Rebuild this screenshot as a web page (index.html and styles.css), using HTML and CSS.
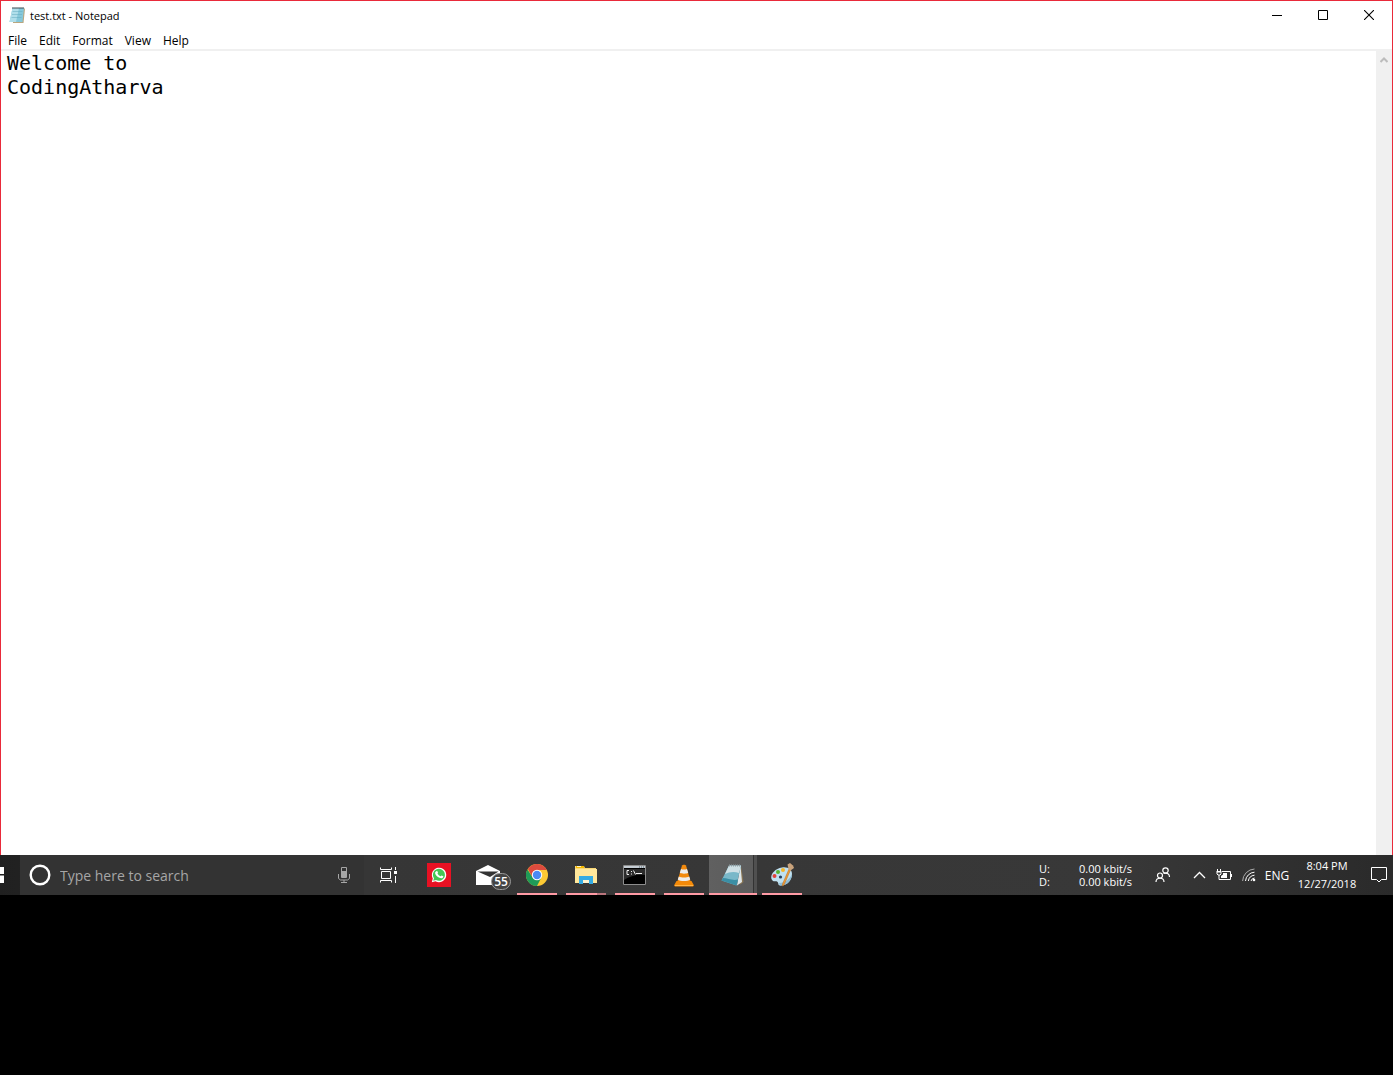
FILE: index.html
```html
<!DOCTYPE html>
<html lang="en">
<head>
  <meta charset="UTF-8">
  <meta name="viewport" content="width=device-width, initial-scale=1.0">
  <title>test.txt - Notepad</title>
  <link rel="stylesheet" href="styles.css">
</head>
<body>
  <main class="window">
    <header class="titlebar">
      <svg class="title-icon" width="16" height="18" viewBox="0 0 16 18">
        <path d="M4 2.500h12L14.500 17H4z" fill="#b9a67f"/>
        <path d="M3.500 2H15l-1.500 14H.5z" fill="#86c8da"/>
        <path d="M3.500 2H10L7 16H.5z" fill="#b0deea"/>
        <path d="M3.500 5.500h10M3 8.500h10M2.500 11.500h10" stroke="#62aabf" stroke-width=".5"/>
        <path d="M3.500 2h12" stroke="#3d4a50" stroke-width="2" stroke-dasharray="1 1"/>
      </svg>
      <h1>test.txt - Notepad</h1>
      <div class="window-controls">
        <button aria-label="Minimize"><svg width="10" height="10"><path d="M0 5.500h10" stroke="#000"/></svg></button>
        <button aria-label="Maximize"><svg width="10" height="10"><path d="M.5.5h9v9h-9z" fill="none" stroke="#000"/></svg></button>
        <button aria-label="Close"><svg width="10" height="10"><path d="M0 0l10 10M10 0L0 10" stroke="#000" stroke-width="1.100"/></svg></button>
      </div>
    </header>

    <nav class="menu">
      <button>File</button>
      <button>Edit</button>
      <button>Format</button>
      <button>View</button>
      <button>Help</button>
    </nav>

    <div class="editor">
      <textarea aria-label="Text" spellcheck="false">Welcome to
CodingAtharva</textarea>
      <div class="scrollbar">
        <button aria-label="Scroll up"><svg width="8" height="8" viewBox="0 0 8 8"><path d="M.5 6L4 2.500 7.500 6" fill="none" stroke="#bcbcbc" stroke-width="2"/></svg></button>
      </div>
    </div>
  </main>

  <footer class="taskbar">
    <button class="start" aria-label="Start">
      <svg width="4" height="16"><path d="M0 0h4v7H0zM0 8.500h4V16H0z" fill="#fff"/></svg>
    </button>

    <div class="search">
      <svg width="22" height="22" viewBox="0 0 22 22"><circle cx="11" cy="11" r="9.300" fill="none" stroke="#fff" stroke-width="2.400"/></svg>
      <input type="text" aria-label="Search" placeholder="Type here to search">
      <button aria-label="Voice search">
        <svg width="12" height="18" viewBox="0 0 12 18" fill="none" stroke="#a6a6a6">
          <path d="M3.500 1.500h5v10h-5z"/>
          <path d="M4 5h4v6H4z" fill="#a6a6a6" stroke="none"/>
          <path d="M.5 8v4.500l2 1.500h7l2-1.500V8M6 14v2M3 16.500h6"/>
        </svg>
      </button>
    </div>

    <div class="apps">
      <button class="app task-view" aria-label="Task View">
        <svg width="18" height="16" viewBox="0 0 18 16" fill="none" stroke="#fff">
          <path d="M1.500 4.500h9v7h-9zM.5.500v2h11v-2M.5 15.500v-2h11v2M15.500 0v3M15.500 9v7"/>
          <path d="M14 4h3v3h-3z" fill="#fff" stroke="none"/>
        </svg>
      </button>
      <button class="app" aria-label="WhatsApp">
        <svg width="24" height="24" viewBox="0 0 24 24">
          <path d="M0 0h24v24H0z" fill="#e81123"/>
          <path d="M4.800 19.200l1-3.700a7.200 7.200 0 1 1 2.700 2.700z" fill="#fff"/>
          <path d="M6.200 17.800l.8-2.500a6 6 0 1 1 2 1.800z" fill="#45c655"/>
          <path d="M9.300 8.200c.8-.6 1.200-.2 1.700 1.300.1.500-.7.900-.4 1.300.7 1.200 1.600 2 2.800 2.400.5.100.8-1 1.300-.8 1.800.8 1.800.9 1.500 1.600-.5 1.300-2 1.600-3.800.8-2-.8-3.800-2.600-4.300-4.500-.2-.9.300-1.600 1.200-2.100z" fill="#fff"/>
        </svg>
      </button>
      <button class="app" aria-label="Mail, 55 unread">
        <svg width="24" height="20" viewBox="0 0 24 20">
          <path d="M0 6L12 0l12 6v14H0z" fill="#fff"/>
          <path d="M1.500 6.500h21L14 12z" fill="#333"/>
        </svg>
        <span class="badge">55</span>
      </button>
      <button class="app running" aria-label="Google Chrome">
        <svg width="22" height="22" viewBox="0 0 22 22">
          <circle cx="11" cy="11" r="11" fill="#fcc934"/>
          <path d="M11 11L6.670 13.500 1.470 5.500A11 11 0 0 0 11 22l4.330-8.500z" fill="#1e9b58"/>
          <path d="M11 6h9.800A11 11 0 0 0 1.900 4.900L6.670 13.500z" fill="#dd4b3e"/>
          <circle cx="11" cy="11" r="5.200" fill="#fff"/>
          <circle cx="11" cy="11" r="4.200" fill="#4a8af4"/>
        </svg>
      </button>
      <button class="app running grouped" aria-label="File Explorer">
        <svg width="22" height="20" viewBox="0 0 22 20">
          <path d="M0 1h9l1 2h11v15H0z" fill="#f8d775"/>
          <path d="M1 1h8v2H1z" fill="#f5b900"/>
          <path d="M2 1.500h4" stroke="#fff3c0"/>
          <path d="M0 4h22v14H0z" fill="#ffe79b"/>
          <path d="M4 19v-8h14v8h-4v-4H8v4z" fill="#35abe3"/>
          <path d="M8 15h6v3H8z" fill="#fff3cf"/>
        </svg>
      </button>
      <button class="app running" aria-label="Command Prompt">
        <svg width="23" height="20" viewBox="0 0 23 20">
          <path d="M.5.5h22v19H.5z" fill="#000" stroke="#8d8d8d"/>
          <path d="M1 1h21v2H1z" fill="#c5cdd4"/>
          <path d="M16 2h1M18 2h1M20 2h1" stroke="#536471"/>
          <path d="M1 4h21v6C14 9 7 11 1 15z" fill="#2c2c2c"/>
          <path d="M6 5.500H4v4h2M8.500 6v1M8.500 8.500v1M10.500 5.500l2 4M13 8.500h6" stroke="#eee" fill="none"/>
        </svg>
      </button>
      <button class="app running" aria-label="VLC media player">
        <svg width="20" height="23" viewBox="0 0 20 23">
          <path d="M2.500 17h15l2.500 4.500-1 1H1l-1-1z" fill="#f58a07"/>
          <path d="M1 21.500h18" stroke="#ffb347"/>
          <path d="M8 1.500c.5-1 3.500-1 4 0L16.500 17c-2 2.500-11 2.500-13 0z" fill="#f28a0e"/>
          <path d="M7 5c1.500.7 4.500.7 6 0l1.200 3.800c-2 1.200-6.400 1.200-8.400 0zM4.800 12.500c2.500 1.300 8 1.300 10.400 0l1 3c-2.500 2-10 2-12.400 0z" fill="#ececec"/>
        </svg>
      </button>
      <button class="app running active" aria-label="Notepad">
        <svg width="24" height="23" viewBox="0 0 24 23">
          <path d="M20 2l2.500 16-3 2.500-2-2z" fill="#8a7654"/>
          <path d="M19.500 1.500L21 18l-5 3.500z" fill="#dfe7ea"/>
          <path d="M8 1.500h12L15.500 21.500.5 16.500z" fill="#79b8c9"/>
          <path d="M8 1.500h12L18 9C13 7 8 8 4 10z" fill="#cfe0e5"/>
          <path d="M.5 16.500l15 5 1.500-6C11 17 7 14 2 14z" fill="#3b8fa6"/>
          <path d="M8 1.500h12" stroke="#8f9b9f" stroke-width="2" stroke-dasharray="1 1"/>
        </svg>
      </button>
      <button class="app running" aria-label="Paint">
        <svg width="24" height="24" viewBox="0 0 24 24">
          <path d="M12 4.500c6-1 10 2 10 6.500 0 6-5 12-12 11.500-2.500-.2-1-3-3-4-1.500-.8-2.500.5-4.500-1C-1 14 3 6 12 4.500z" fill="#bfe0f0"/>
          <path d="M10 22.500C17 23 22 17 22 11c-2 5-7 9-13 9z" fill="#8fbdd6"/>
          <circle cx="4.500" cy="13" r="2" fill="#e2413a"/>
          <circle cx="8" cy="9" r="2" fill="#55b32e"/>
          <circle cx="13" cy="7" r="2" fill="#f5b52a"/>
          <circle cx="10.500" cy="14" r="1.600" fill="#26405c"/>
          <path d="M19 6l1.500 1-6.500 15-1.500 1V21z" fill="#ee9a35" stroke="#b96a1c" stroke-width=".5"/>
          <path d="M17.500 1.500L20 0l3 2.500L24 5l-3.500 2.500L18.500 6z" fill="#c9a37c"/>
        </svg>
      </button>
    </div>

    <div class="tray">
      <dl class="speed">
        <dt>U:</dt><dd>0.00 kbit/s</dd>
        <dt>D:</dt><dd>0.00 kbit/s</dd>
      </dl>
      <button class="people" aria-label="People">
        <svg width="16" height="16" viewBox="0 0 16 16" fill="none" stroke="#fff" stroke-width="1.200">
          <circle cx="10.500" cy="3.500" r="2.700"/><path d="M8.500 6.500c4-1 6 .5 6 3.500"/>
          <circle cx="5" cy="8.500" r="2.500"/><path d="M1 15c0-5 8-5 8 0"/>
        </svg>
      </button>
      <button class="chevron" aria-label="Show hidden icons">
        <svg width="13" height="8"><path d="M1 7l5.500-5.500L12 7" fill="none" stroke="#fff" stroke-width="1.300"/></svg>
      </button>
      <button class="status" aria-label="Battery">
        <svg width="16" height="12" viewBox="0 0 16 12" fill="none" stroke="#fff">
          <path d="M6 2.500h8.500v8h-10"/>
          <path d="M15.500 5v3M1.500 0v2M4.500 0v2M.5 2.500h5M3 6v4.500h2"/>
          <path d="M1 3h4v2L4 6H2L1 5z"/>
          <path d="M7 4h4v5H5V7l2-1.500z" fill="#fff" stroke="none"/>
        </svg>
      </button>
      <button class="status" aria-label="Network">
        <svg width="14" height="14" viewBox="0 0 14 14" fill="none" stroke="#fff">
          <path d="M.6 13A12.500 12.500 0 0 1 12.500 1" stroke="#aaa"/>
          <path d="M3.500 13A9.500 9.500 0 0 1 12.500 4.200M6.300 13A7 7 0 0 1 12.500 7.200M9 13a4 4 0 0 1 3.500-3"/>
          <circle cx="12" cy="12" r="1.300" fill="#fff" stroke="none"/>
        </svg>
      </button>
      <button class="lang">ENG</button>
      <button class="clock"><time>8:04 PM</time><time>12/27/2018</time></button>
      <button class="notifications" aria-label="Notifications">
        <svg width="16" height="16"><path d="M.5.5h15v12h-5L8 15l-2.500-2.500h-5z" fill="none" stroke="#fff"/></svg>
      </button>
    </div>
  </footer>
</body>
</html>
```
FILE: styles.css
```css
* {
  box-sizing: border-box;
}
body {
  margin: 0;
  padding-bottom: 180px;
  min-height: 100vh;
  display: flex;
  flex-direction: column;
  background-color: #000;
  font-family: "Open Sans", "Noto Sans", sans-serif;
  font-size: 11px;
}
button {
  display: flex;
  align-items: center;
  justify-content: center;
  padding: 0;
  border: none;
  background: none;
  color: inherit;
  font: inherit;
}
svg {
  display: block;
  flex: none;
}

/* Notepad window */
.window {
  flex: 1;
  display: flex;
  flex-direction: column;
  background-color: white;
  border: 1px solid #e92a3a;
  border-bottom: none;
}
.titlebar {
  display: flex;
  align-items: center;
  height: 30px;
  padding: 0 0 2px 8px;
}
.titlebar h1 {
  margin: 0 0 0 5px;
  font-size: 11px;
  font-weight: normal;
}
.window-controls {
  display: flex;
  align-self: stretch;
  margin-left: auto;
}
.window-controls button {
  width: 46px;
}
.menu {
  display: flex;
  gap: 12px;
  height: 20px;
  padding: 0 7px;
  border-bottom: 2px solid #f0f0f0;
  font-size: 12px;
}
.editor {
  flex: 1;
  display: flex;
}
.editor textarea {
  flex: 1;
  padding: 0 6px;
  border: none;
  outline: none;
  resize: none;
  font-family: "DejaVu Sans Mono", monospace;
  font-size: 20px;
  line-height: 24px;
  color: #000;
}
.scrollbar {
  width: 16px;
  background-color: #f0f0f0;
}
.scrollbar button {
  width: 100%;
  height: 18px;
}

/* Taskbar */
.taskbar {
  display: flex;
  height: 40px;
  background: linear-gradient(to right, #202020, #363636 364px, #383838 80%, #2a2a2a);
  color: white;
}
.start {
  width: 20px;
  justify-content: flex-start;
}
.search {
  display: flex;
  align-items: center;
  width: 344px;
  padding: 0 14px 0 9px;
  background-color: #333;
}
.search input {
  flex: 1;
  min-width: 0;
  margin-left: 9px;
  padding: 0;
  border: none;
  outline: none;
  background: none;
  color: white;
  font-family: inherit;
  font-size: 14px;
}
.search input::placeholder {
  color: #a6a6a6;
}
.apps {
  display: flex;
}
.app {
  position: relative;
  width: 49px;
}
.task-view {
  width: 50px;
}
.badge {
  position: absolute;
  right: 1px;
  bottom: 5px;
  width: 20px;
  height: 17px;
  border: 1px solid #999;
  border-radius: 9px;
  background-color: #444;
  font-size: 12px;
  font-weight: 600;
  line-height: 15px;
}
.running::after {
  content: "";
  position: absolute;
  left: 5px;
  right: 4px;
  bottom: 0;
  height: 2px;
  background-color: #ff9aa5;
}
.grouped::after {
  background: linear-gradient(to right, #ff9aa5 31px, #b9757d 31px);
}
.active {
  background: linear-gradient(to right, transparent 1px, #606060 1px, #5c5c5c 45px, #333 45px, #333 46px, #505050 46px);
}
.active::after {
  left: 1px;
  right: 0;
}

/* Tray */
.tray {
  display: flex;
  margin-left: auto;
}
.speed {
  display: grid;
  grid-template-columns: 40px 60px;
  align-content: center;
  margin: 0;
  line-height: 13px;
  white-space: nowrap;
}
.speed dd {
  margin: 0;
}
.people {
  width: 48px;
}
.chevron {
  width: 24px;
}
.status {
  width: 25px;
}
.lang {
  width: 32px;
  font-size: 12px;
}
.clock {
  flex-direction: column;
  width: 68px;
  margin-right: 4px;
  line-height: 18px;
}
.notifications {
  width: 28px;
}
```
